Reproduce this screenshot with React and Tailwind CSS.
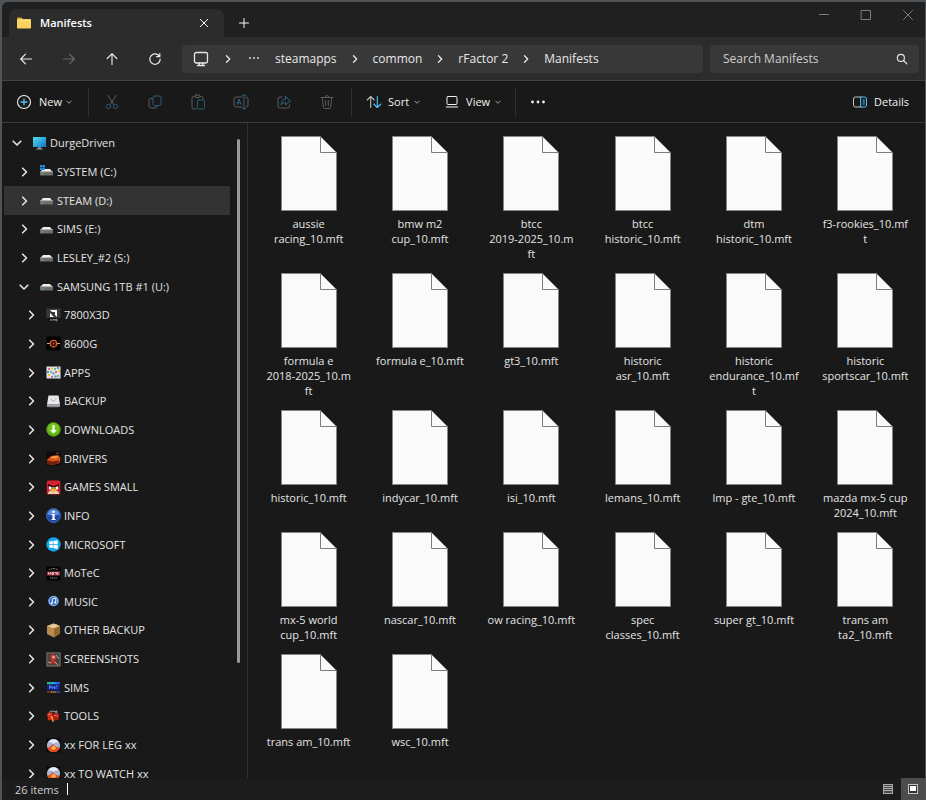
import React from "react";

const TREE = [
  { name: "DurgeDriven", level: 0, open: true, icon: "pc" },
  { name: "SYSTEM (C:)", level: 1, icon: "system" },
  { name: "STEAM (D:)", level: 1, icon: "drive", selected: true },
  { name: "SIMS (E:)", level: 1, icon: "drive" },
  { name: "LESLEY_#2 (S:)", level: 1, icon: "drive" },
  { name: "SAMSUNG 1TB #1 (U:)", level: 1, open: true, icon: "drive" },
  { name: "7800X3D", level: 2, icon: "amd" },
  { name: "8600G", level: 2, icon: "ryzen" },
  { name: "APPS", level: 2, icon: "apps" },
  { name: "BACKUP", level: 2, icon: "backup" },
  { name: "DOWNLOADS", level: 2, icon: "download" },
  { name: "DRIVERS", level: 2, icon: "drivers" },
  { name: "GAMES SMALL", level: 2, icon: "bird" },
  { name: "INFO", level: 2, icon: "info" },
  { name: "MICROSOFT", level: 2, icon: "windows" },
  { name: "MoTeC", level: 2, icon: "motec" },
  { name: "MUSIC", level: 2, icon: "music" },
  { name: "OTHER BACKUP", level: 2, icon: "box" },
  { name: "SCREENSHOTS", level: 2, icon: "photo" },
  { name: "SIMS", level: 2, icon: "sims" },
  { name: "TOOLS", level: 2, icon: "tools" },
  { name: "xx FOR LEG xx", level: 2, icon: "disc" },
  { name: "xx TO WATCH xx", level: 2, icon: "disc" },
];

const FILES = [
  ["aussie", "racing_10.mft"],
  ["bmw m2", "cup_10.mft"],
  ["btcc", "2019-2025_10.m", "ft"],
  ["btcc", "historic_10.mft"],
  ["dtm", "historic_10.mft"],
  ["f3-rookies_10.mf", "t"],
  ["formula e", "2018-2025_10.m", "ft"],
  ["formula e_10.mft"],
  ["gt3_10.mft"],
  ["historic", "asr_10.mft"],
  ["historic", "endurance_10.mf", "t"],
  ["historic", "sportscar_10.mft"],
  ["historic_10.mft"],
  ["indycar_10.mft"],
  ["isi_10.mft"],
  ["lemans_10.mft"],
  ["lmp - gte_10.mft"],
  ["mazda mx-5 cup", "2024_10.mft"],
  ["mx-5 world", "cup_10.mft"],
  ["nascar_10.mft"],
  ["ow racing_10.mft"],
  ["spec", "classes_10.mft"],
  ["super gt_10.mft"],
  ["trans am", "ta2_10.mft"],
  ["trans am_10.mft"],
  ["wsc_10.mft"],
];

const INDENT = ["pl-2", "pl-[15px]", "pl-[22px]"];

function Drive() {
  return (
    <>
      <path d="M4 5h7l2.5 3h-12z" fill="#f1f1f1" />
      <rect x="1" y="7.5" width="13" height="4" rx=".5" fill="#6c6c6c" />
      <path d="M1 7.7h13" stroke="#bdbdbd" strokeWidth=".6" />
      <rect x="2.5" y="9.5" width="2" height="1" fill="#4fd06a" />
    </>
  );
}

const GLYPHS = {
  pc: (
    <>
      <defs>
        <linearGradient id="pcScreen" x1="0" y1="0" x2="1" y2="1">
          <stop offset="0" stopColor="#4fe0e6" />
          <stop offset="1" stopColor="#1474cf" />
        </linearGradient>
      </defs>
      <rect x="1" y="1" width="13" height="10" rx=".6" fill="url(#pcScreen)" />
      <path d="M6 11h3v1.6H6z" fill="#7b8790" />
      <path d="M4.500 12.600h6v1h-6z" fill="#aab4bb" />
    </>
  ),
  system: (
    <>
      <Drive />
      <path d="M1 1h2.300v2.300H1zM3.700 1H6v2.300H3.700zM1 3.700h2.300V6H1zM3.700 3.700H6V6H3.700z" fill="#1f93ea" />
    </>
  ),
  drive: <Drive />,
  amd: (
    <>
      <rect x=".5" y=".5" width="14" height="14" fill="#3a3a3c" />
      <rect x=".5" y="10" width="14" height="4.500" fill="#111" />
      <path d="M4 2h7v7L9 7V4H6z" fill="#fff" />
      <path d="M4 5v4h4L6.500 7.500H5.700V6.600z" fill="#fff" />
      <path d="M4 13l1-2 1 2M7 13v-2l1 1 1-1v2M10 13v-2h1l.6 1-.6 1z" fill="none" stroke="#bbb" strokeWidth=".6" />
    </>
  ),
  ryzen: (
    <>
      <rect x=".5" y=".5" width="14" height="14" fill="#020202" />
      <path d="M1 7.500h3.500M10.500 7.500H14" stroke="#d9a081" strokeWidth="1" />
      <circle cx="7.500" cy="7.500" r="3.200" fill="#260a04" stroke="#e2582a" strokeWidth="1.300" />
      <path d="M6.500 6.500h2v2h-2z" fill="#a9543a" />
      <path d="M5 10.500a4 4 0 0 0 5 0" stroke="#8a2f17" fill="none" />
    </>
  ),
  apps: (
    <>
      <rect x=".5" y="1.500" width="14" height="12" fill="#dfe3e6" />
      <path d="M2 3h2v2H2zM9 6h2v2H9zM5 11h2v2H5z" fill="#ed5ea8" />
      <path d="M5 2.500h2v2H5zM12 5h2v2h-2zM2 9h2v2H2z" fill="#f2c43c" />
      <path d="M8 3h2v2H8zM4 6h2v2H4zM11 10h2v2h-2z" fill="#5ac46c" />
      <path d="M11 2h2v2h-2zM6.500 7.500h2v2h-2zM1 6h2v2H1zM8.500 10.500h2v2h-2z" fill="#4a91e0" />
    </>
  ),
  backup: (
    <>
      <path d="M2.500 1.500h10l1.500 9H1z" fill="#e8e9eb" />
      <path d="M1 10.500h13v2.300H1z" fill="#a8abae" />
      <path d="M3 12.800h9v.7H3z" fill="#55585b" />
      <path d="M5 5a2.600 2.600 0 0 0 5 0M4.500 4l1 1M10.500 4l-1 1" stroke="#a6a9ad" fill="none" strokeWidth=".8" />
    </>
  ),
  download: (
    <>
      <circle cx="7.500" cy="7.500" r="7.200" fill="#5cab12" />
      <circle cx="7.500" cy="6.500" r="5.500" fill="#70c41c" />
      <path d="M6.500 3h2v5h2.200L7.500 11.700 4.300 8h2.200z" fill="#fff" />
    </>
  ),
  drivers: (
    <>
      <rect x=".5" y=".5" width="14" height="14" fill="#100a08" />
      <path d="M1 9l4-4 7-1 2.500 3-1 5-7 2-5-1z" fill="#d8541a" />
      <path d="M4 7l4-2 5 .6-3 2z" fill="#f7a145" />
      <path d="M1 9.500l6 1 6-1-1 3-6 1.500-5-1z" fill="#6e210b" />
      <path d="M10 2.200h3" stroke="#888" strokeWidth=".6" />
    </>
  ),
  bird: (
    <>
      <rect x=".8" y=".5" width="13.500" height="14" rx="1.500" fill="#d9222d" />
      <path d="M2 13c1-4 10-4 11 0v1H2z" fill="#e5cfa8" />
      <path d="M3 6h4.200v3.500H3zM7.800 6H12v3.500H7.800z" fill="#fff" />
      <path d="M2 4l5.500 2.200L13 4v2L7.500 7.500 2 6z" fill="#240a0b" />
      <path d="M4.800 9.500L7.500 7l3.500 2.800L7.500 12z" fill="#f3b229" />
      <circle cx="6" cy="8" r=".7" />
      <circle cx="9" cy="8" r=".7" />
    </>
  ),
  info: (
    <>
      <circle cx="7.500" cy="7.500" r="7" fill="#1b4aa8" stroke="#5d83cd" strokeWidth=".7" />
      <path d="M1.600 6.500a6 6 0 0 1 11.800 0c-4 1.500-8 1.500-11.800 0z" fill="#5f8ee0" />
      <circle cx="7.500" cy="3.800" r="1.300" fill="#fff" />
      <path d="M5.800 6h2.800v5h1v1H5.500v-1h1V7h-.7z" fill="#fff" />
    </>
  ),
  windows: (
    <>
      <circle cx="7.500" cy="7.500" r="7.200" fill="#12a5ec" />
      <path d="M3.300 4.500l3.500-.5v3.200H3.300zM7.400 3.900l4.300-.7v4H7.400zM3.300 7.900h3.500v3.200l-3.500-.5zM7.400 7.900h4.300v4l-4.300-.7z" fill="#fff" />
    </>
  ),
  motec: (
    <>
      <rect x=".5" y=".5" width="14" height="14" fill="#030303" />
      <path d="M3 4a6 4 0 0 1 9 0" stroke="#999" fill="none" strokeDasharray="1.500 .7" />
      <path d="M1 5.500h13v4H1z" fill="#a8343c" />
      <path d="M2.500 8.500v-2l1 1 1-1v2M6 6.500h1.500v2H6zM8.500 6.500h1.800v2M12.500 6.500h-1.300v2h1.300" stroke="#eee" strokeWidth=".7" fill="none" />
      <path d="M4 12h7" stroke="#8b8b8b" strokeDasharray="1.500 .5" />
    </>
  ),
  music: (
    <>
      <circle cx="7.500" cy="7" r="5.300" fill="#2f6cc4" />
      <circle cx="7.500" cy="7" r="4.500" fill="none" stroke="#94bdeb" strokeWidth="1.200" />
      <path d="M6.300 9.200V4.800l3.500-.8v4.400" stroke="#eaf4ff" fill="none" />
      <circle cx="5.700" cy="9.200" r="1" fill="#fff" />
      <circle cx="9.200" cy="8.500" r="1" fill="#fff" />
    </>
  ),
  box: (
    <>
      <path d="M7.500.5L14 3v7.500L8 14.500 1 11V3z" fill="#b98b4e" />
      <path d="M7.500.5L14 3 8 5.500 1 3z" fill="#e2c28b" />
      <path d="M8 5.500L14 3v7.500l-6 4z" fill="#94672f" />
      <path d="M4.500 4.200L10.700 1.700" stroke="#f1dcb2" />
    </>
  ),
  photo: (
    <>
      <rect x=".5" y=".5" width="14" height="14" fill="#8e8780" />
      <rect x="1.300" y="1.300" width="12.400" height="12.400" fill="#44433f" />
      <path d="M5 2l4 1 2 3-2 2 2 5-4-2-4 2 2-5-1-3z" fill="#b8312b" />
      <circle cx="7.500" cy="5" r="1.500" fill="#dcae91" />
      <path d="M2 10l3 1M10 3l3 4M9 10l3 3" stroke="#c8c4bb" strokeWidth=".8" />
    </>
  ),
  sims: (
    <>
      <defs>
        <linearGradient id="rainbow">
          <stop offset="0" stopColor="#28c34a" />
          <stop offset=".5" stopColor="#1aa4e8" />
          <stop offset="1" stopColor="#324de8" />
        </linearGradient>
      </defs>
      <path d="M1 2h13v2.500H1z" fill="url(#rainbow)" />
      <path d="M1 4.500h13v6H1z" fill="#0d2387" />
      <path d="M3.500 9V6h1.700v1.500H3.500M6.500 9V6.500l1 1 1-1V9M10 9V6h2" stroke="#6f92f0" strokeWidth=".8" fill="none" />
      <path d="M1 11.500h4v1H1z" fill="#e33b28" />
      <path d="M5 11.500h5v1H5z" fill="#e8bb28" />
      <path d="M10 11.500h4v1h-4z" fill="#386ce8" />
    </>
  ),
  tools: (
    <>
      <path d="M1 4.500l5-1.500 1 7-5 1.500z" fill="#d2281c" />
      <path d="M6 4l7 .5v6L7 12z" fill="#a91d14" />
      <path d="M3 3.500c1-2 6-2 8 1" stroke="#b4b4b4" fill="none" />
      <path d="M2 6l3-1M8 6.500l4 .5" stroke="#ff7663" />
      <path d="M4.500 7l2 6 1.300-.5L6.500 7z" fill="#efa02b" />
      <path d="M8.500 2.500l2-1.300L12 3l-1 1z" fill="#858a90" />
    </>
  ),
  disc: (
    <>
      <rect x=".5" y=".5" width="14" height="14" fill="#08080a" />
      <circle cx="7.500" cy="7.500" r="6.600" fill="#a6b5d6" />
      <path d="M2.500 4.500a5.500 5.500 0 0 1 10 0Q9 3.500 7.500 6 6 3.500 2.500 4.500z" fill="#e8eefa" />
      <path d="M1.200 9.500q2.500.5 4-2t3 0q2 2.500 5.600 2a6.600 6.600 0 0 1-12.600 0z" fill="#e4491b" />
      <path d="M5 11q0-2.500 2.500-3.500Q10 8.500 10 11q-2.500 1.500-5 0z" fill="#ffb14f" />
    </>
  ),
};

function TreeIcon({ kind }) {
  return (
    <svg className="size-[15px] shrink-0" viewBox="0 0 15 15" aria-hidden="true">
      {GLYPHS[kind]}
    </svg>
  );
}

function Icon({ size = "size-4", width = 1, children }) {
  return (
    <svg className={`${size} shrink-0`} viewBox="0 0 16 16" fill="none" stroke="currentColor" strokeWidth={width} strokeLinecap="round" strokeLinejoin="round" aria-hidden="true">
      {children}
    </svg>
  );
}

function Chevron({ down = false }) {
  return (
    <svg className="size-[10px] shrink-0" viewBox="0 0 10 10" fill="none" stroke="currentColor" strokeWidth="1.600" strokeLinecap="round" strokeLinejoin="round" aria-hidden="true">
      <path d={down ? "M1.200 3.200L5 7l3.800-3.800" : "M3.700 1.200L7.500 5 3.700 8.800"} />
    </svg>
  );
}

function CrumbChevron() {
  return (
    <svg className="size-2 shrink-0" viewBox="0 0 8 8" fill="none" stroke="currentColor" strokeWidth="1.300" strokeLinecap="round" strokeLinejoin="round" aria-hidden="true">
      <path d="M2.500.8L5.700 4 2.500 7.200" />
    </svg>
  );
}

function SmallChevron() {
  return (
    <svg className="size-[6px] shrink-0 text-[#a5a5a5]" viewBox="0 0 6 6" fill="none" stroke="currentColor" aria-hidden="true">
      <path d="M.5 1.800L3 4.300l2.500-2.500" />
    </svg>
  );
}

function Divider() {
  return <span className="h-7 w-px shrink-0 bg-[#303030]" />;
}

function TitleBar() {
  return (
    <header className="flex h-[35px] shrink-0 items-stretch bg-[#202020] pl-[7px]">
      <div className="mt-[7px] flex w-[215px] items-center rounded-t-lg bg-[#2c2c2c] pr-3 pl-2 text-[11px] font-semibold text-white">
        <svg className="size-[14px]" viewBox="0 0 14 14" aria-hidden="true">
          <path d="M0 2.500Q0 1.500 1 1.500h3.500L6 3h7q1 0 1 1v1H0z" fill="#dda31f" />
          <rect y="3.500" width="14" height="9" rx=".8" fill="#fbd361" />
          <path d="M.5 4h13" stroke="#ffe59a" />
        </svg>
        <span className="ml-[9px] flex-1">Manifests</span>
        <button aria-label="Close tab" className="flex size-4 items-center justify-center">
          <Icon size="size-3" width={1.3}>
            <path d="M3 3l10 10M13 3L3 13" />
          </Icon>
        </button>
      </div>
      <button aria-label="New tab" className="mt-[7px] ml-3 flex w-4 items-center justify-center text-white">
        <Icon size="size-3" width={1.3}>
          <path d="M8 2v12M2 8h12" />
        </Icon>
      </button>
      <div className="ml-auto flex h-6 items-center gap-[26px] pr-[9px] text-[#7c7c7c]">
        <button aria-label="Minimize">
          <Icon>
            <path d="M3.500 8.500h9" />
          </Icon>
        </button>
        <button aria-label="Maximize">
          <Icon>
            <rect x="3.500" y="4.500" width="9" height="9" />
          </Icon>
        </button>
        <button aria-label="Close">
          <Icon>
            <path d="M3.500 4.500l9 9M12.500 4.500l-9 9" />
          </Icon>
        </button>
      </div>
    </header>
  );
}

function NavBar() {
  const crumbs = ["steamapps", "common", "rFactor 2", "Manifests"];
  return (
    <nav className="flex h-11 shrink-0 items-center border-b border-[#434343] bg-[#2c2c2c] pr-[6px] pl-4 text-[#e8e8e8]" aria-label="Address">
      <div className="flex w-[164px] gap-[27px]">
        <button aria-label="Back">
          <Icon width={1.2}>
            <path d="M13.500 8H2.800M7.500 3.200L2.700 8l4.800 4.800" />
          </Icon>
        </button>
        <button aria-label="Forward" className="text-[#6a6a6a]" disabled>
          <Icon width={1.2}>
            <path d="M2.500 8h10.700M8.500 3.200L13.300 8l-4.800 4.800" />
          </Icon>
        </button>
        <button aria-label="Up">
          <Icon width={1.2}>
            <path d="M8 13.500V2.800M3.200 7.500L8 2.700l4.800 4.800" />
          </Icon>
        </button>
        <button aria-label="Refresh">
          <Icon width={1.2}>
            <path d="M12.500 5.500A5.200 5.200 0 1 0 13.200 8M12.800 2.500v3.200H9.600" />
          </Icon>
        </button>
      </div>
      <div className="flex h-7 min-w-0 flex-1 items-center rounded bg-[#383838] pl-[11px] text-xs">
        <Icon width={1.3}>
          <rect x="1.500" y="1.500" width="13" height="10.500" rx="1.800" />
          <path d="M6.300 12v2.300M9.700 12v2.300M4.500 14.500h7" />
        </Icon>
        <span className="mr-4 ml-[15px] flex">
          <CrumbChevron />
        </span>
        <button aria-label="More folders" className="mr-[15px]">
          <svg className="h-4 w-3" viewBox="0 0 12 16" fill="currentColor" aria-hidden="true">
            <circle cx="2" cy="7" r=".9" />
            <circle cx="6" cy="7" r=".9" />
            <circle cx="10" cy="7" r=".9" />
          </svg>
        </button>
        {crumbs.map((crumb, i) => (
          <React.Fragment key={crumb}>
            {i > 0 && (
              <span className="mx-[14px] flex">
                <CrumbChevron />
              </span>
            )}
            <a href="#" className="pt-px whitespace-nowrap">
              {crumb}
            </a>
          </React.Fragment>
        ))}
      </div>
      <label className="ml-[7px] flex h-7 w-[209px] items-center rounded bg-[#383838] pr-[11px] pl-[13px] text-xs">
        <input type="search" aria-label="Search Manifests" placeholder="Search Manifests" className="min-w-0 flex-1 bg-transparent pt-px outline-none placeholder:text-[#cfcfcf]" />
        <Icon size="size-3" width={1.5}>
          <circle cx="6.500" cy="6.500" r="4.700" />
          <path d="M10 10l4.500 4.500" />
        </Icon>
      </label>
    </nav>
  );
}

function Toolbar() {
  return (
    <div role="toolbar" aria-label="Commands" className="flex h-[42px] shrink-0 items-center border-b border-[#3b3b3b] bg-[#191919] pt-px pr-4 pl-[14px] text-[11px] font-medium text-[#f0f0f0]">
      <button className="flex w-[72px] items-center">
        <Icon width={1.1}>
          <circle cx="8" cy="8" r="6.500" />
          <path d="M8 5v6M5 8h6" stroke="#4cc2ff" strokeWidth="1.300" />
        </Icon>
        <span className="mr-1 ml-[7px] pt-px">New</span>
        <SmallChevron />
      </button>
      <Divider />
      <div className="flex w-[262px] gap-[27px] pl-[15px] text-[#5c5c5c]">
        <button aria-label="Cut" disabled>
          <Icon>
            <path d="M4 1.500l5.700 9M12 1.500l-5.700 9" />
            <circle cx="4.500" cy="12.500" r="2.200" stroke="#265c78" />
            <circle cx="11.500" cy="12.500" r="2.200" stroke="#265c78" />
          </Icon>
        </button>
        <button aria-label="Copy" disabled>
          <Icon>
            <path d="M5.500 4.500H4a2 2 0 0 0-2 2V12a2 2 0 0 0 2 2h4a2 2 0 0 0 2-2" />
            <rect x="6" y="2" width="8" height="9.500" rx="1.800" stroke="#265c78" />
          </Icon>
        </button>
        <button aria-label="Paste" disabled>
          <Icon>
            <path d="M5 2.500H3.500Q2 2.500 2 4v9.500Q2 15 3.500 15H6M10 2.500h1.500Q13 2.500 13 4v1" />
            <rect x="5" y="1" width="5" height="2.500" rx="1" />
            <rect x="7.500" y="6" width="7" height="9" rx="1.300" stroke="#265c78" />
          </Icon>
        </button>
        <button aria-label="Rename" disabled>
          <Icon>
            <path d="M9 3H3Q1 3 1 5v6q0 2 2 2h6M13 3q2 0 2 2v6q0 2-2 2" />
            <path d="M4 10.500L6 5l2 5.500M4.700 8.800h2.600M11 1.500v13M9.500 1.200h3M9.500 14.800h3" stroke="#2b6482" />
          </Icon>
        </button>
        <button aria-label="Share" disabled>
          <Icon>
            <path d="M6 3H4Q2 3 2 5v7q0 2 2 2h7.500q2 0 2-2v-1" />
            <path d="M9.500 2.500L14.500 7l-5 4V8.500Q6.500 8.500 5 11q.3-5.500 4.500-6z" stroke="#2b6482" />
          </Icon>
        </button>
        <button aria-label="Delete" disabled>
          <Icon>
            <path d="M2 3.500h12M6 3.500q0-2 2-2t2 2M3.300 3.500l1 9.500q.2 1.500 1.700 1.500h4q1.500 0 1.700-1.500l1-9.500M6.700 6.500v5M9.300 6.500v5" />
          </Icon>
        </button>
      </div>
      <Divider />
      <button className="ml-[14px] flex items-center">
        <Icon width={1.1}>
          <path d="M4.700 13.500v-11M1.200 6L4.700 2.500 8.200 6" stroke="#bababa" />
          <path d="M11.300 2.500v11M7.800 10l3.500 3.500 3.500-3.500" stroke="#4cc2ff" />
        </Icon>
        <span className="mr-[5px] ml-1.5 pt-px">Sort</span>
        <SmallChevron />
      </button>
      <button className="ml-6 flex items-center">
        <Icon>
          <rect x="3" y="2.500" width="10" height="8" rx="1" />
          <path d="M2.500 13h11" strokeWidth="1.500" stroke="#b0b0b0" />
        </Icon>
        <span className="mr-[5px] ml-1.5 pt-px">View</span>
        <SmallChevron />
      </button>
      <span className="ml-[14px] flex">
        <Divider />
      </span>
      <button aria-label="See more" className="ml-[14px]">
        <svg className="size-4" viewBox="0 0 16 16" fill="currentColor" aria-hidden="true">
          <circle cx="2.500" cy="8" r="1.400" />
          <circle cx="8" cy="8" r="1.400" />
          <circle cx="13.500" cy="8" r="1.400" />
        </svg>
      </button>
      <button className="ml-auto flex items-center gap-1.5">
        <Icon>
          <path d="M9 3H3.500q-2 0-2 2v6q0 2 2 2H9" stroke="#c5c5c5" />
          <path d="M9 3h3.500q2 0 2 2v6q0 2-2 2H9zM11 6h1.500M11 8h1.500M11 10h1.500" stroke="#4cc2ff" />
        </Icon>
        <span className="pt-px">Details</span>
      </button>
    </div>
  );
}

function Sidebar() {
  return (
    <aside className="flex w-[246px] shrink-0 overflow-hidden border-r border-[#303030] pl-[2px]">
      <ul className="-mb-[10px] flex w-[226px] flex-col pt-1.5">
        {TREE.map((node) => (
          <li key={node.name + node.level} className="min-h-0 flex-1">
            <button className={`flex h-full w-full items-center text-[11px] leading-3 whitespace-nowrap text-[#e4e4e4] ${INDENT[node.level]} ${node.selected ? "bg-[#333333]" : ""}`}>
              <Chevron down={node.open} />
              <span className="mr-[3px] ml-[10px] flex">
                <TreeIcon kind={node.icon} />
              </span>
              {node.name}
            </button>
          </li>
        ))}
      </ul>
      <div className="mt-4 ml-[7px] h-4/5 w-[3px] rounded-full bg-[#9a9a9a]" />
    </aside>
  );
}

function FileGrid() {
  return (
    <main className="flex-1 overflow-hidden pt-[13px] pr-1 pl-[5px]">
      <ul className="grid grid-cols-6 gap-y-3">
        {FILES.map((lines) => (
          <li key={lines.join("")} className="flex flex-col items-center gap-1 text-center text-[11px] leading-[15px] text-[#e4e4e4]">
            <svg className="h-[76px] w-14" viewBox="0 0 56 76" aria-hidden="true">
              <path d="M.5.5H39.500L55.500 16.500V74.500H.5z" fill="#fafafa" stroke="#868686" />
              <path d="M39.500.5V16.500H55.500" fill="none" stroke="#7c7c7c" />
            </svg>
            <p>
              {lines.map((line) => (
                <span key={line} className="block whitespace-nowrap">
                  {line}
                </span>
              ))}
            </p>
          </li>
        ))}
      </ul>
    </main>
  );
}

function StatusBar() {
  return (
    <footer className="flex h-[22px] shrink-0 items-center bg-[#1c1c1c] pl-[13px] text-[11px] text-[#cfcfcf]">
      <span className="pt-0.5">26 items</span>
      <span className="ml-2 h-3 w-px bg-white" />
      <button aria-label="Details view" className="mr-[2px] ml-auto flex size-[22px] items-center justify-center">
        <svg className="size-[10px]" viewBox="0 0 10 10" stroke="#a9a9a9" fill="#4a4a4a" aria-hidden="true">
          <rect x=".5" y=".5" width="9" height="9" />
          <path d="M0 2.500h10M0 4.500h10M0 6.500h10" />
        </svg>
      </button>
      <button aria-label="Large icons view" className="flex h-full w-6 items-center justify-center bg-[#4d4d4d]">
        <svg className="size-[10px]" viewBox="0 0 10 10" aria-hidden="true">
          <rect x=".5" y=".5" width="9" height="9" fill="#333" stroke="#c4c4c4" />
          <rect x="2" y="2" width="6" height="5" fill="#fff" />
        </svg>
      </button>
    </footer>
  );
}

export default function App() {
  return (
    <div className="h-screen bg-[#4e5457] pt-[2px] pr-px pl-[2px] font-['Open_Sans','Noto_Sans',sans-serif]">
      <div className="flex h-full flex-col overflow-hidden rounded-tl-md bg-[#191919]">
        <TitleBar />
        <NavBar />
        <Toolbar />
        <div className="flex min-h-0 flex-1">
          <Sidebar />
          <FileGrid />
        </div>
        <StatusBar />
      </div>
    </div>
  );
}
